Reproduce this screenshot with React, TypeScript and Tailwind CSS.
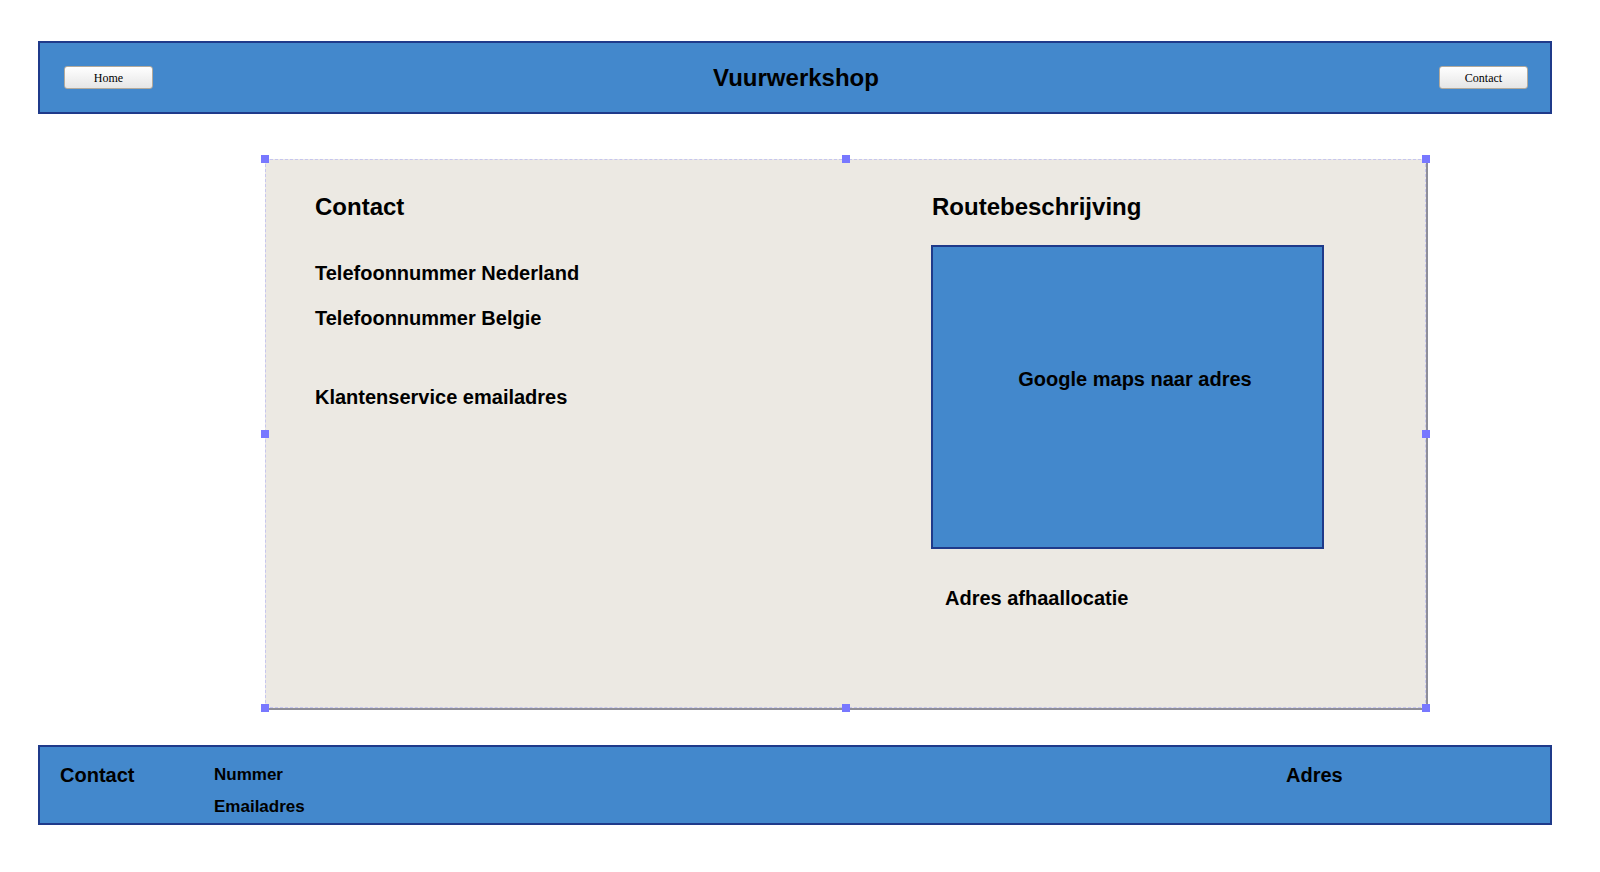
const sans = { fontFamily: '"Liberation Sans", Arial, sans-serif' };

function NavButton({ label }: { label: string }) {
  return (
    <button
      className="h-[23px] w-[89px] rounded-[3px] border border-[#b3aa9c] bg-gradient-to-b from-white to-[#e6e6e6] text-[12px] text-black font-['Liberation_Serif',serif] leading-none"
    >
      {label}
    </button>
  );
}

function Handle({ className }: { className: string }) {
  return <div className={"absolute h-[8px] w-[8px] bg-[#7878ff] " + className} />;
}

export default function App() {
  return (
    <div className="min-h-screen bg-white pt-[41px] text-black" style={sans}>
      {/* top bar */}
      <header className="ml-[38px] flex h-[73px] w-[1514px] items-center border-2 border-[#1f3a8a] bg-[#4388cc] pl-[24px] pr-[22px]">
        <NavButton label="Home" />
        <h1 className="flex-1 text-center text-[24px] font-bold leading-[28px]">Vuurwerkshop</h1>
        <NavButton label="Contact" />
      </header>

      {/* content panel */}
      <div className="relative ml-[265px] mt-[45px] h-[549px] w-[1161px] border border-dashed border-[#c6c6ee] bg-[#ece9e3] shadow-[2px_2px_0_#8e8e98]">
        <Handle className="-left-[5px] -top-[5px]" />
        <Handle className="left-[576px] -top-[5px]" />
        <Handle className="-right-[5px] -top-[5px]" />
        <Handle className="-left-[5px] top-[270px]" />
        <Handle className="-right-[5px] top-[270px]" />
        <Handle className="-left-[5px] -bottom-[5px]" />
        <Handle className="left-[576px] -bottom-[5px]" />
        <Handle className="-right-[5px] -bottom-[5px]" />

        <div className="flex pl-[49px] pt-[33px]">
          <div className="w-[617px]">
            <h2 className="text-[24px] font-bold leading-[28px]">Contact</h2>
            <p className="mt-[40px] text-[20px] font-bold leading-[24px]">Telefoonnummer Nederland</p>
            <p className="mt-[21px] text-[20px] font-bold leading-[24px]">Telefoonnummer Belgie</p>
            <p className="mt-[55px] text-[20px] font-bold leading-[24px]">Klantenservice emailadres</p>
          </div>
          <div>
            <h2 className="text-[24px] font-bold leading-[28px]">Routebeschrijving</h2>
            <div className="-ml-[1px] mt-[24px] h-[304px] w-[393px] border-2 border-[#1f3a8a] bg-[#4388cc] pl-[15px] pt-[120px] text-center">
              <p className="text-[20px] font-bold leading-[24px]">Google maps naar adres</p>
            </div>
            <p className="ml-[13px] mt-[37px] text-[20px] font-bold leading-[24px]">Adres afhaallocatie</p>
          </div>
        </div>
      </div>

      {/* footer */}
      <footer className="ml-[38px] mt-[37px] flex h-[80px] w-[1514px] border-2 border-[#1f3a8a] bg-[#4388cc] pl-[20px] pt-[16px]">
        <div className="w-[154px] text-[20px] font-bold leading-[24px]">Contact</div>
        <div className="flex flex-1 flex-col gap-[12px] pt-[2px] text-[17px] font-bold leading-[20px]">
          <span>Nummer</span>
          <span>Emailadres</span>
        </div>
        <div className="w-[264px] text-[20px] font-bold leading-[24px]">Adres</div>
      </footer>
    </div>
  );
}
